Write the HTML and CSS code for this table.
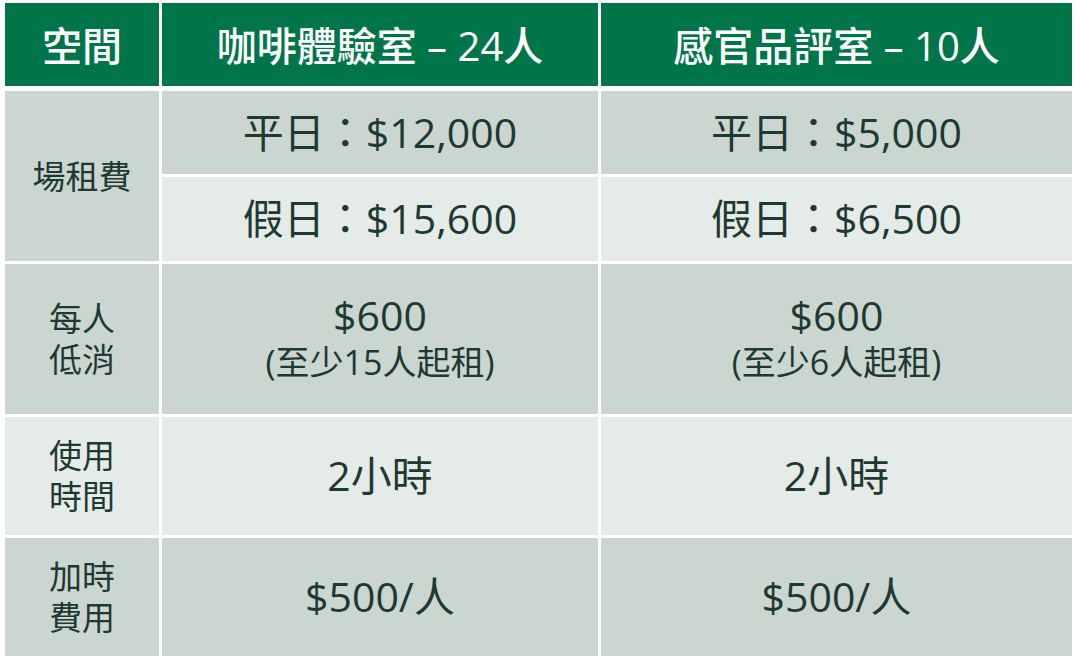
FILE: index.html
```html
<!DOCTYPE html>
<html lang="zh-Hant">
<head>
<meta charset="utf-8">
<link rel="stylesheet" href="styles.css">
</head>
<body>
<div class="price-table">
  <div class="head">
    <div class="hcell">空間</div>
    <div class="hcell">咖啡體驗室 – 24人</div>
    <div class="hcell">感官品評室 – 10人</div>
  </div>
  <div class="body">
    <div class="label dark span2">場租費</div>
    <div class="cell dark">平日：$12,000</div>
    <div class="cell dark">平日：$5,000</div>
    <div class="cell light">假日：$15,600</div>
    <div class="cell light">假日：$6,500</div>

    <div class="label dark">每人<br>低消</div>
    <div class="cell dark stack"><span class="main">$600</span><span class="note">(至少15人起租)</span></div>
    <div class="cell dark stack"><span class="main">$600</span><span class="note">(至少6人起租)</span></div>

    <div class="label light">使用<br>時間</div>
    <div class="cell light">2小時</div>
    <div class="cell light">2小時</div>

    <div class="label dark">加時<br>費用</div>
    <div class="cell dark">$500/人</div>
    <div class="cell dark">$500/人</div>
  </div>
</div>
</body>
</html>
```

FILE: styles.css
```css
html, body {
  margin: 0;
  padding: 0;
  background: #ffffff;
}

body {
  padding: 3px 0 0 5px;
  font-family: "Open Sans", "Noto Sans CJK TC", sans-serif;
  color: #1e3932;
}

.price-table {
  width: 1067px;
}

.head,
.body {
  display: grid;
  grid-template-columns: 154px 436px 471px;
  column-gap: 3px;
}

.head {
  height: 83px;
  margin-bottom: 5px;
}

.hcell {
  background: #00754a;
  color: #ffffff;
  font-weight: 500;
  font-size: 40px;
  display: flex;
  align-items: center;
  justify-content: center;
  white-space: nowrap;
  padding-bottom: 2px;
}

.body {
  grid-template-rows: 83px 84px 150px 118px 118px;
  row-gap: 3px;
}

.dark {
  background: #ccd6d1;
}

.light {
  background: #e5ebe8;
}

.span2 {
  grid-row: span 2;
}

.label {
  display: flex;
  align-items: center;
  justify-content: center;
  text-align: center;
  font-size: 33px;
  line-height: 41px;
}

.cell {
  display: flex;
  align-items: center;
  justify-content: center;
  font-size: 41px;
  white-space: nowrap;
  padding-bottom: 6px;
}

.stack {
  flex-direction: column;
  padding-bottom: 2px;
}

.stack .main {
  font-size: 41px;
  line-height: 48px;
}

.stack .note {
  font-size: 34px;
  line-height: 46px;
}
```
